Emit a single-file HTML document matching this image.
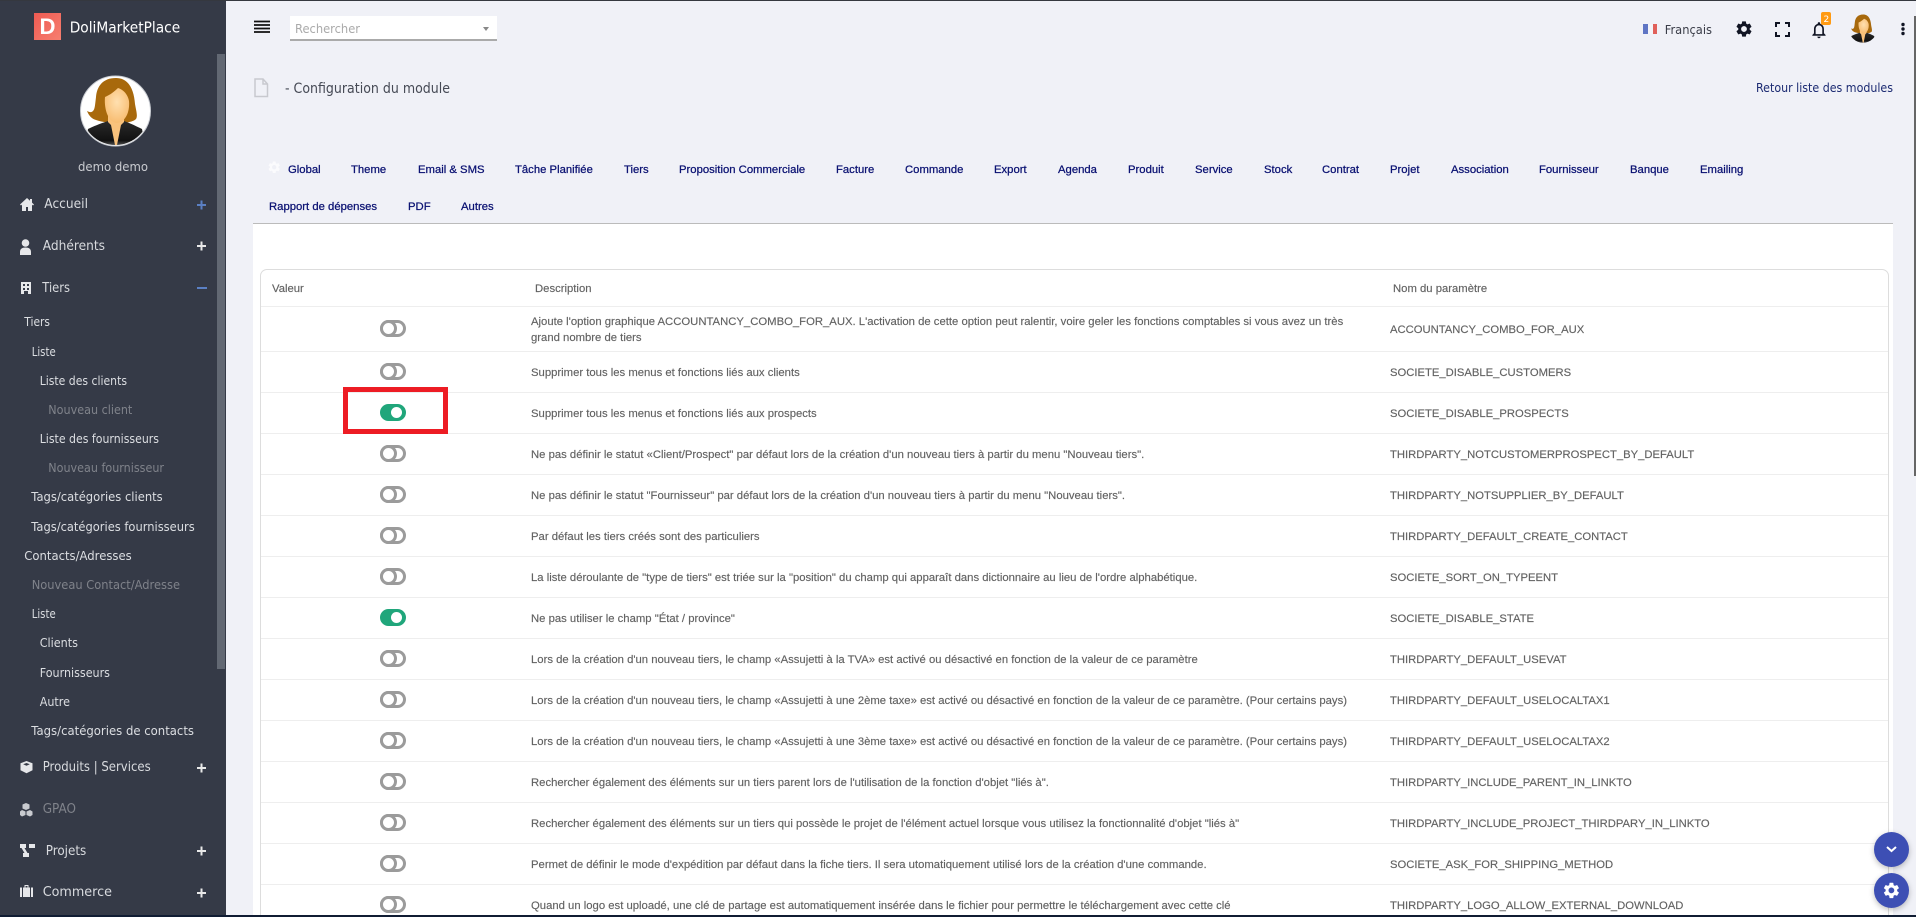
<!DOCTYPE html>
<html lang="fr"><head><meta charset="utf-8"><title>Configuration du module</title>
<style>
html,body{margin:0;padding:0;width:1916px;height:917px;overflow:hidden;background:#f0f1f7;font-family:"Liberation Sans",Arial,sans-serif}
#page{position:absolute;left:0;top:0;width:1916px;height:917px;overflow:hidden;background:#f0f1f7}
#side{position:absolute;left:0;top:0;width:226px;height:917px;background:#353a47}
#thumb{position:absolute;left:217px;top:54px;width:8px;height:615px;background:#626873}
#over{position:absolute;left:0;top:0;width:1916px;height:917px;pointer-events:none}
#panel{position:absolute;left:253px;top:223px;width:1640px;height:694px;background:#fff;border-top:1px solid #bbb;box-sizing:border-box}
#table{position:absolute;left:260px;top:269px;width:1629px;height:660px;border:1px solid #ddd;border-radius:7px;box-sizing:border-box;background:#fff}
.ln{position:absolute;left:261px;width:1627px;height:1px;background:#eee}
.tx{position:absolute;font-size:11.3px;line-height:16px;height:16px;color:#626262;white-space:nowrap;transform:translateY(1px);-webkit-text-stroke:.15px #626262}
.tx[style*="left:1390px"]{font-size:11.25px}
.tab{position:absolute;font-size:11.3px;line-height:16px;height:16px;color:#0a1172;white-space:nowrap;transform:translateY(1px);-webkit-text-stroke:.25px #0a1172}
.tg{position:absolute;left:380px;width:26px;height:17px;border-radius:9px;box-sizing:border-box;border:3px solid #9b9b9b;background:#fff}
.tg::before{content:"";position:absolute;left:-3px;top:-3px;width:17px;height:17px;box-sizing:border-box;border:3px solid #9b9b9b;border-radius:50%;background:#fff}
.tg.on{background:#20a67b;border-color:#20a67b}
.tg.on::before{left:8px;top:0;width:11px;height:11px;border:0;background:#fff}
#red{position:absolute;left:343px;top:387px;width:105px;height:47px;box-sizing:border-box;border:5px solid #ed1c24}
.fab{position:absolute;left:1874px;width:35px;height:35px;border-radius:50%;background:#3d4fb4;box-shadow:0 2px 6px rgba(0,0,0,.25)}
#sb{position:absolute;left:1914px;top:16px;width:2px;height:460px;background:#666}
#topl{position:absolute;left:0;top:0;width:1916px;height:1px;background:#35383f}
#botl{position:absolute;left:0;top:915px;width:1916px;height:2px;background:#101c33}
#search{position:absolute;left:290px;top:16px;width:207px;height:25px;background:#fff;border-bottom:2px solid #aaa;box-sizing:border-box}
</style></head><body>
<div id="page">
<div id="panel"></div>
<div id="table"></div>
<div class="ln" style="top:306px"></div>
<div class="ln" style="top:351px"></div>
<div class="ln" style="top:392px"></div>
<div class="ln" style="top:433px"></div>
<div class="ln" style="top:474px"></div>
<div class="ln" style="top:515px"></div>
<div class="ln" style="top:556px"></div>
<div class="ln" style="top:597px"></div>
<div class="ln" style="top:638px"></div>
<div class="ln" style="top:679px"></div>
<div class="ln" style="top:720px"></div>
<div class="ln" style="top:761px"></div>
<div class="ln" style="top:802px"></div>
<div class="ln" style="top:843px"></div>
<div class="ln" style="top:884px"></div>

<span class="tab" style="left:288px;top:161px">Global</span>
<span class="tab" style="left:351px;top:161px">Theme</span>
<span class="tab" style="left:418px;top:161px">Email &amp; SMS</span>
<span class="tab" style="left:515px;top:161px">Tâche Planifiée</span>
<span class="tab" style="left:624px;top:161px">Tiers</span>
<span class="tab" style="left:679px;top:161px">Proposition Commerciale</span>
<span class="tab" style="left:836px;top:161px">Facture</span>
<span class="tab" style="left:905px;top:161px">Commande</span>
<span class="tab" style="left:994px;top:161px">Export</span>
<span class="tab" style="left:1058px;top:161px">Agenda</span>
<span class="tab" style="left:1128px;top:161px">Produit</span>
<span class="tab" style="left:1195px;top:161px">Service</span>
<span class="tab" style="left:1264px;top:161px">Stock</span>
<span class="tab" style="left:1322px;top:161px">Contrat</span>
<span class="tab" style="left:1390px;top:161px">Projet</span>
<span class="tab" style="left:1451px;top:161px">Association</span>
<span class="tab" style="left:1539px;top:161px">Fournisseur</span>
<span class="tab" style="left:1630px;top:161px">Banque</span>
<span class="tab" style="left:1700px;top:161px">Emailing</span>
<span class="tab" style="left:269px;top:198px">Rapport de dépenses</span>
<span class="tab" style="left:408px;top:198px">PDF</span>
<span class="tab" style="left:461px;top:198px">Autres</span>

<span class="tx" style="left:272px;top:280px">Valeur</span>
<span class="tx" style="left:535px;top:280px">Description</span>
<span class="tx" style="left:1393px;top:280px">Nom du paramètre</span>

<div class="tg" style="top:320px"></div>
<span class="tx" style="left:531px;top:313px">Ajoute l'option graphique ACCOUNTANCY_COMBO_FOR_AUX. L'activation de cette option peut ralentir, voire geler les fonctions comptables si vous avez un très</span>
<span class="tx" style="left:531px;top:329px">grand nombre de tiers</span>
<span class="tx" style="left:1390px;top:321px">ACCOUNTANCY_COMBO_FOR_AUX</span>

<div class="tg" style="top:363px"></div>
<span class="tx" style="left:531px;top:364px">Supprimer tous les menus et fonctions liés aux clients</span>
<span class="tx" style="left:1390px;top:364px">SOCIETE_DISABLE_CUSTOMERS</span>

<div class="tg on" style="top:404px"></div>
<span class="tx" style="left:531px;top:405px">Supprimer tous les menus et fonctions liés aux prospects</span>
<span class="tx" style="left:1390px;top:405px">SOCIETE_DISABLE_PROSPECTS</span>

<div class="tg" style="top:445px"></div>
<span class="tx" style="left:531px;top:446px">Ne pas définir le statut «Client/Prospect" par défaut lors de la création d'un nouveau tiers à partir du menu "Nouveau tiers".</span>
<span class="tx" style="left:1390px;top:446px">THIRDPARTY_NOTCUSTOMERPROSPECT_BY_DEFAULT</span>

<div class="tg" style="top:486px"></div>
<span class="tx" style="left:531px;top:487px">Ne pas définir le statut "Fournisseur" par défaut lors de la création d'un nouveau tiers à partir du menu "Nouveau tiers".</span>
<span class="tx" style="left:1390px;top:487px">THIRDPARTY_NOTSUPPLIER_BY_DEFAULT</span>

<div class="tg" style="top:527px"></div>
<span class="tx" style="left:531px;top:528px">Par défaut les tiers créés sont des particuliers</span>
<span class="tx" style="left:1390px;top:528px">THIRDPARTY_DEFAULT_CREATE_CONTACT</span>

<div class="tg" style="top:568px"></div>
<span class="tx" style="left:531px;top:569px">La liste déroulante de "type de tiers" est triée sur la "position" du champ qui apparaît dans dictionnaire au lieu de l'ordre alphabétique.</span>
<span class="tx" style="left:1390px;top:569px">SOCIETE_SORT_ON_TYPEENT</span>

<div class="tg on" style="top:609px"></div>
<span class="tx" style="left:531px;top:610px">Ne pas utiliser le champ "État / province"</span>
<span class="tx" style="left:1390px;top:610px">SOCIETE_DISABLE_STATE</span>

<div class="tg" style="top:650px"></div>
<span class="tx" style="left:531px;top:651px">Lors de la création d'un nouveau tiers, le champ «Assujetti à la TVA» est activé ou désactivé en fonction de la valeur de ce paramètre</span>
<span class="tx" style="left:1390px;top:651px">THIRDPARTY_DEFAULT_USEVAT</span>

<div class="tg" style="top:691px"></div>
<span class="tx" style="left:531px;top:692px">Lors de la création d'un nouveau tiers, le champ «Assujetti à une 2ème taxe» est activé ou désactivé en fonction de la valeur de ce paramètre. (Pour certains pays)</span>
<span class="tx" style="left:1390px;top:692px">THIRDPARTY_DEFAULT_USELOCALTAX1</span>

<div class="tg" style="top:732px"></div>
<span class="tx" style="left:531px;top:733px">Lors de la création d'un nouveau tiers, le champ «Assujetti à une 3ème taxe» est activé ou désactivé en fonction de la valeur de ce paramètre. (Pour certains pays)</span>
<span class="tx" style="left:1390px;top:733px">THIRDPARTY_DEFAULT_USELOCALTAX2</span>

<div class="tg" style="top:773px"></div>
<span class="tx" style="left:531px;top:774px">Rechercher également des éléments sur un tiers parent lors de l'utilisation de la fonction d'objet "liés à".</span>
<span class="tx" style="left:1390px;top:774px">THIRDPARTY_INCLUDE_PARENT_IN_LINKTO</span>

<div class="tg" style="top:814px"></div>
<span class="tx" style="left:531px;top:815px">Rechercher également des éléments sur un tiers qui possède le projet de l'élément actuel lorsque vous utilisez la fonctionnalité d'objet "liés à"</span>
<span class="tx" style="left:1390px;top:815px">THIRDPARTY_INCLUDE_PROJECT_THIRDPARY_IN_LINKTO</span>

<div class="tg" style="top:855px"></div>
<span class="tx" style="left:531px;top:856px">Permet de définir le mode d'expédition par défaut dans la fiche tiers. Il sera utomatiquement utilisé lors de la création d'une commande.</span>
<span class="tx" style="left:1390px;top:856px">SOCIETE_ASK_FOR_SHIPPING_METHOD</span>

<div class="tg" style="top:896px"></div>
<span class="tx" style="left:531px;top:897px">Quand un logo est uploadé, une clé de partage est automatiquement insérée dans le fichier pour permettre le téléchargement avec cette clé</span>
<span class="tx" style="left:1390px;top:897px">THIRDPARTY_LOGO_ALLOW_EXTERNAL_DOWNLOAD</span>

<div id="red"></div>
<div id="search"></div>
<div id="side"></div>
<div id="thumb"></div>
<div class="fab" style="top:832px"></div>
<div class="fab" style="top:873px"></div>
<div id="sb"></div>

<svg id="over" viewBox="0 0 1916 917" xmlns="http://www.w3.org/2000/svg">
<defs>
<linearGradient id="lg" x1="0" y1="0" x2="1" y2="1"><stop offset="0" stop-color="#ee5a52"/><stop offset="1" stop-color="#f77f70"/></linearGradient>
<radialGradient id="fc" cx=".5" cy=".4" r=".6"><stop offset="0" stop-color="#ffe0b0"/><stop offset="1" stop-color="#f8bd72"/></radialGradient>
<linearGradient id="jk" x1="0" y1="0" x2="0" y2="1"><stop offset="0" stop-color="#2a2a2a"/><stop offset=".7" stop-color="#111"/><stop offset="1" stop-color="#888"/></linearGradient>
<clipPath id="ac"><circle cx="115.5" cy="111" r="34"/></clipPath>
<g id="fig" clip-path="url(#ac)">
<path d="M116 78c-13 0-19 8-20 19-1 8-1 12-3 14-2 2-4 1-6 0 2 5 5 8 9 9 6 2 14 3 22 3 8 0 15-1 18-4 2-3 0-9-1-15-1-14-6-26-19-26z" fill="#a8690c"/>
<path d="M88 129c6-3 14-6 20-8l8 6 8-6c6 2 12 5 18 8l4 20H84z" fill="url(#jk)"/>
<path d="M108 116h16v6l-3 3-4 20h-2l-4-20-3-3z" fill="#f9c27c"/>
<path d="M118 88c-3 3-8 7-13 9-1 10 2 25 12 26 9-1 13-12 12-22-1-6-5-11-11-13z" fill="url(#fc)"/>
</g>
<path id="gear" d="M19.14 12.94c.04-.3.06-.61.06-.94 0-.32-.02-.64-.07-.94l2.03-1.58c.18-.14.23-.41.12-.61l-1.92-3.32c-.12-.22-.37-.29-.59-.22l-2.39.96c-.5-.38-1.03-.7-1.62-.94l-.36-2.54c-.04-.24-.24-.41-.48-.41h-3.84c-.24 0-.43.17-.47.41l-.36 2.54c-.59.24-1.13.57-1.62.94l-2.39-.96c-.22-.08-.47 0-.59.22L2.74 8.87c-.12.21-.08.47.12.61l2.03 1.58c-.05.3-.09.63-.09.94s.02.64.07.94l-2.03 1.58c-.18.14-.23.41-.12.61l1.92 3.32c.12.22.37.29.59.22l2.39-.96c.5.38 1.03.7 1.62.94l.36 2.54c.05.24.24.41.48.41h3.84c.24 0 .44-.17.47-.41l.36-2.54c.59-.24 1.13-.56 1.62-.94l2.39.96c.22.08.47 0 .59-.22l1.92-3.32c.12-.22.07-.47-.12-.61l-2.01-1.58zM12 15.6c-1.98 0-3.6-1.62-3.6-3.6s1.62-3.6 3.6-3.6 3.6 1.62 3.6 3.6-1.62 3.6-3.6 3.6z" fill-rule="evenodd"/>
</defs>

<!-- logo -->
<rect x="34" y="13" width="27" height="27" fill="url(#lg)"/>
<text x="39.500" y="34" font-family="Liberation Sans,sans-serif" font-weight="700" font-size="22" fill="#fff" textLength="16" lengthAdjust="spacingAndGlyphs">D</text>
<g font-family="DejaVu Sans,sans-serif">
<text x="69.700" y="32.500" font-size="15" fill="#fff" textLength="110.500" lengthAdjust="spacingAndGlyphs">DoliMarketPlace</text>

<!-- avatar -->
<circle cx="115.500" cy="111" r="35" fill="#fff" stroke="#c9ccd2" stroke-width="1"/>
<use href="#fig"/>
<text x="78" y="171" font-size="12.500" fill="#c9cbd0" textLength="70" lengthAdjust="spacingAndGlyphs">demo demo</text>

<!-- menu main -->
<g font-size="13.500" fill="#d9dbdf">
<text x="44.300" y="208" textLength="43.700" lengthAdjust="spacingAndGlyphs">Accueil</text>
<text x="42.700" y="250" textLength="62.300" lengthAdjust="spacingAndGlyphs">Adhérents</text>
<text x="42.300" y="292" textLength="27.700" lengthAdjust="spacingAndGlyphs">Tiers</text>
<text x="42.700" y="771" textLength="108" lengthAdjust="spacingAndGlyphs">Produits | Services</text>
<text x="42.700" y="813" textLength="33.300" lengthAdjust="spacingAndGlyphs" fill="#7f828a">GPAO</text>
<text x="45.700" y="855" textLength="40.600" lengthAdjust="spacingAndGlyphs">Projets</text>
<text x="42.700" y="896" textLength="69.300" lengthAdjust="spacingAndGlyphs">Commerce</text>
</g>

<!-- menu sub -->
<g font-size="12" fill="#dcdee2">
<text x="24.300" y="326" textLength="25.700" lengthAdjust="spacingAndGlyphs">Tiers</text>
<text x="31.700" y="356" textLength="24" lengthAdjust="spacingAndGlyphs">Liste</text>
<text x="39.700" y="385" textLength="87.300" lengthAdjust="spacingAndGlyphs">Liste des clients</text>
<text x="48.300" y="414" textLength="84" lengthAdjust="spacingAndGlyphs" fill="#7f828a">Nouveau client</text>
<text x="39.700" y="443" textLength="119.300" lengthAdjust="spacingAndGlyphs">Liste des fournisseurs</text>
<text x="48.300" y="472" textLength="115.700" lengthAdjust="spacingAndGlyphs" fill="#7f828a">Nouveau fournisseur</text>
<text x="31.300" y="501" textLength="131.400" lengthAdjust="spacingAndGlyphs">Tags/catégories clients</text>
<text x="31.300" y="531" textLength="163.400" lengthAdjust="spacingAndGlyphs">Tags/catégories fournisseurs</text>
<text x="24.300" y="560" textLength="107.400" lengthAdjust="spacingAndGlyphs">Contacts/Adresses</text>
<text x="31.700" y="589" textLength="148.300" lengthAdjust="spacingAndGlyphs" fill="#7f828a">Nouveau Contact/Adresse</text>
<text x="31.700" y="618" textLength="24" lengthAdjust="spacingAndGlyphs">Liste</text>
<text x="39.700" y="647" textLength="38.300" lengthAdjust="spacingAndGlyphs">Clients</text>
<text x="39.700" y="677" textLength="70.300" lengthAdjust="spacingAndGlyphs">Fournisseurs</text>
<text x="39.700" y="706" textLength="30.300" lengthAdjust="spacingAndGlyphs">Autre</text>
<text x="31.300" y="735" textLength="162.700" lengthAdjust="spacingAndGlyphs">Tags/catégories de contacts</text>
</g>

<!-- plus/minus -->
<g stroke-width="2" fill="none">
<path d="M197 205h9M201.500 200.500v9" stroke="#5b80c4"/>
<path d="M197 246h9M201.500 241.500v9" stroke="#e8e8e8"/>
<path d="M197 288h10" stroke="#5b80c4"/>
<path d="M197 768h9M201.500 763.500v9" stroke="#e8e8e8"/>
<path d="M197 851h9M201.500 846.500v9" stroke="#e8e8e8"/>
<path d="M197 893h9M201.500 888.500v9" stroke="#e8e8e8"/>
</g>

<!-- sidebar icons -->
<g fill="#e6e7ea">
<path d="M27 198l-7 6.500 1 1 1-.9V211h4v-4h2v4h4v-6.400l1 .9 1-1-2-1.900V199h-2v1.700z"/>
<circle cx="25.500" cy="243" r="3.800"/><path d="M20 255v-3c0-3 2-4.500 5.500-4.500s5.500 1.500 5.500 4.500v3z"/>
<path d="M21 282h10v12h-3v-3h-4v3h-3zM23 284v2h2v-2zm4 0v2h2v-2zM23 288v2h2v-2zm4 0v2h2v-2z" fill-rule="evenodd"/>
<path d="M26.500 761l6 2.300v7l-6 3-6-3v-7zm0 2l-3.300 1.300 3.300 1.400 3.300-1.400z" fill-rule="evenodd"/>
<path d="M26 803l3.500 1.500v4L26 810l-3.500-1.500v-4zM22 810l3.500 1.500v3.500L22 816.500 20 815v-3.500zM30 810l2.500 1.500V815L30 816.500 26.500 815v-3.500z" fill="#c9cbd0"/>
<path d="M20 844h6v4h-1.500l3 5h1.500v4h-6v-4h1.500l-3-5H20zM29 844h6v4h-6z"/>
<path d="M20 887.500h2V897h-2zM31 887.500h2V897h-2zM23 887.500h1.500v-2.500h4v2.500H30V897h-7zM25.500 886v1.500h2V886z" fill-rule="evenodd"/>
</g>

<!-- top bar -->
<path d="M254 21.500h16M254 25h16M254 28.500h16M254 32h16" stroke="#111" stroke-width="1.700"/>
<text x="295" y="33" font-size="12" fill="#aaa" textLength="65" lengthAdjust="spacingAndGlyphs">Rechercher</text>
<path d="M483 27h6l-3 4z" fill="#888"/>
<path d="M255 79h8l4.500 5v12.500H255zM263 79v5h4.500" fill="none" stroke="#c8c9cf" stroke-width="1.500"/>
<text x="285" y="93" font-size="14" fill="#464a55" textLength="165" lengthAdjust="spacingAndGlyphs">- Configuration du module</text>
<text x="1756" y="92" font-size="12" fill="#1b2a72" textLength="137" lengthAdjust="spacingAndGlyphs">Retour liste des modules</text>
<text x="1664.700" y="34" font-size="12" fill="#3a3d48" textLength="47.300" lengthAdjust="spacingAndGlyphs">Français</text>
</g>

<!-- flag -->
<rect x="1643" y="24" width="5" height="10" fill="#5f75c4"/><rect x="1648" y="24" width="5" height="10" fill="#f4f4f8"/><rect x="1653" y="24" width="4" height="10" fill="#e0605a"/>
<!-- gear -->
<use href="#gear" transform="translate(1734.400 19.400) scale(.8)" fill="#111524"/>
<!-- fullscreen -->
<path d="M1776 27v-4h4M1785 23h4v4M1789 32v4h-4M1780 36h-4v-4" fill="none" stroke="#111524" stroke-width="2"/>
<!-- bell -->
<path transform="translate(1809 20) scale(.83)" fill="#111524" d="M12 22c1.100 0 2-.9 2-2h-4c0 1.100.9 2 2 2zm6-6v-5c0-3.070-1.630-5.640-4.500-6.320V4c0-.83-.67-1.500-1.500-1.500s-1.500.67-1.500 1.500v.68C7.640 5.360 6 7.920 6 11v5l-2 2v1h16v-1l-2-2zm-2 1H8v-6c0-2.480 1.510-4.500 4-4.500s4 2.020 4 4.500v6z"/>
<rect x="1821" y="12" width="10" height="13" rx="2" fill="#ff9a12"/>
<text x="1823.500" y="22" font-family="DejaVu Sans,sans-serif" font-size="9" fill="#fff">2</text>
<!-- small avatar -->
<g transform="translate(1814.500 -18.200) scale(.42)"><use href="#fig"/></g>
<!-- dots -->
<circle cx="1903" cy="24.500" r="1.700" fill="#111524"/><circle cx="1903" cy="29" r="1.700" fill="#111524"/><circle cx="1903" cy="33.500" r="1.700" fill="#111524"/>
<!-- Global gear -->
<use href="#gear" transform="translate(267 160) scale(.6)" fill="#fbfbfd"/>
<!-- fabs -->
<path d="M1887 847l4.500 4 4.500-4" fill="none" stroke="#fff" stroke-width="2"/>
<use href="#gear" transform="translate(1881.800 880.800) scale(.8)" fill="#fff"/>
</svg>
<div id="topl"></div>
<div id="botl"></div>
</div>
</body></html>
